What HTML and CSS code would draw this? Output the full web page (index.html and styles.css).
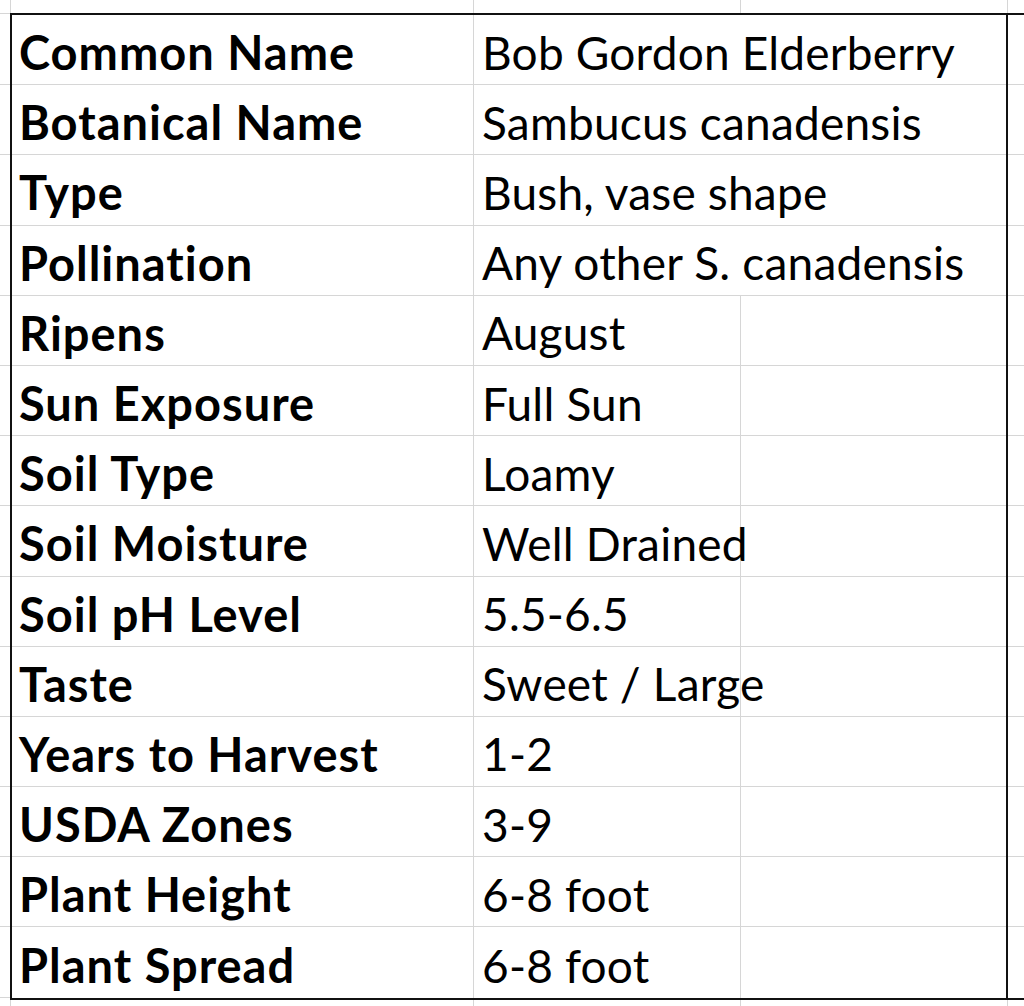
FILE: index.html
```html
<!DOCTYPE html>
<html lang="en">
<head>
<meta charset="utf-8">
<title>Bob Gordon Elderberry</title>
<link rel="stylesheet" href="styles.css">
</head>
<body>
<div class="sheet">
  <div class="strip strip-top">
    <div class="gut"></div>
    <div class="col col-a"></div>
    <div class="col col-b"></div>
    <div class="col col-c"></div>
    <div class="rest"></div>
  </div>
  <div class="middle">
    <div class="gutter gutter-left">
      <div class="g"></div><div class="g"></div><div class="g"></div><div class="g"></div><div class="g"></div><div class="g"></div><div class="g"></div>
      <div class="g"></div><div class="g"></div><div class="g"></div><div class="g"></div><div class="g"></div><div class="g"></div><div class="g"></div>
    </div>
    <div class="table">
      <div class="row"><div class="label">Common Name</div><div class="value">Bob Gordon Elderberry</div><div class="extra"></div></div>
      <div class="row"><div class="label">Botanical Name</div><div class="value">Sambucus canadensis</div><div class="extra"></div></div>
      <div class="row"><div class="label">Type</div><div class="value">Bush, vase shape</div><div class="extra"></div></div>
      <div class="row"><div class="label">Pollination</div><div class="value">Any other S. canadensis</div><div class="extra"></div></div>
      <div class="row"><div class="label">Ripens</div><div class="value">August</div><div class="extra"></div></div>
      <div class="row"><div class="label">Sun Exposure</div><div class="value">Full Sun</div><div class="extra"></div></div>
      <div class="row"><div class="label">Soil Type</div><div class="value">Loamy</div><div class="extra"></div></div>
      <div class="row"><div class="label">Soil Moisture</div><div class="value">Well Drained</div><div class="extra"></div></div>
      <div class="row"><div class="label">Soil pH Level</div><div class="value">5.5-6.5</div><div class="extra"></div></div>
      <div class="row"><div class="label">Taste</div><div class="value">Sweet / Large</div><div class="extra"></div></div>
      <div class="row"><div class="label">Years to Harvest</div><div class="value">1-2</div><div class="extra"></div></div>
      <div class="row"><div class="label">USDA Zones</div><div class="value">3-9</div><div class="extra"></div></div>
      <div class="row"><div class="label">Plant Height</div><div class="value">6-8 foot</div><div class="extra"></div></div>
      <div class="row"><div class="label">Plant Spread</div><div class="value">6-8 foot</div><div class="extra"></div></div>
    </div>
    <div class="gutter gutter-right">
      <div class="g"></div><div class="g"></div><div class="g"></div><div class="g"></div><div class="g"></div><div class="g"></div><div class="g"></div>
      <div class="g"></div><div class="g"></div><div class="g"></div><div class="g"></div><div class="g"></div><div class="g"></div><div class="g"></div>
    </div>
  </div>
  <div class="strip strip-bottom">
    <div class="gut"></div>
    <div class="col col-a"></div>
    <div class="col col-b"></div>
    <div class="col col-c"></div>
    <div class="rest"></div>
  </div>
</div>
</body>
</html>
```

FILE: styles.css
```css
* { box-sizing: border-box; }

html, body {
  margin: 0;
  padding: 0;
  background: #ffffff;
}

body {
  width: 1024px;
  height: 1006px;
  overflow: hidden;
  font-family: Lato, "Liberation Sans", sans-serif;
  color: #000;
}

.sheet {
  display: flex;
  flex-direction: column;
  width: 1024px;
  height: 1006px;
}

.strip {
  display: flex;
  flex: none;
}

.strip-top { height: 13px; }
.strip-bottom { flex: 1; }

.gut { width: 10px; flex: none; }

.col {
  flex: none;
  border-right: 1px solid #d6d6d6;
}

.col-a { width: 464px; border-left: 1px solid #d6d6d6; }
.col-b { width: 267px; }
.col-c { width: 267px; }
.rest { flex: 1; }

.middle {
  display: flex;
  flex: none;
}

.gutter {
  display: flex;
  flex-direction: column;
}

.gutter-left {
  width: 10px;
  flex: none;
  border-top: 1px solid #d6d6d6;
  padding-top: 1px;
}

.gutter-right {
  flex: 1;
  border-top: 2px solid #111;
  border-bottom: 2px solid #111;
}

.g {
  height: 70.2px;
  border-bottom: 1px solid #d6d6d6;
}

.gutter-right .g:last-child { border-bottom: none; }

.table {
  width: 998px;
  flex: none;
  border: 2px solid #111;
  display: flex;
  flex-direction: column;
}

.row {
  display: grid;
  grid-template-columns: 462px 267px 1fr;
  height: 70.2px;
  border-bottom: 1px solid #d6d6d6;
}

.row:last-child { border-bottom: none; }

.label, .value, .extra {
  display: flex;
  align-items: center;
  padding-top: 5px;
  font-size: 46px;
  white-space: nowrap;
  overflow: visible;
}

.label {
  font-weight: 700;
  font-size: 47px;
  letter-spacing: 1px;
  padding-left: 7px;
  border-right: 1px solid #d6d6d6;
}

.value {
  font-weight: 400;
  letter-spacing: 0.2px;
  padding-left: 8px;
  border-right: 1px solid #d6d6d6;
}

.row:first-child .value,
.row:nth-child(2) .value,
.row:nth-child(3) .value,
.row:nth-child(4) .value {
  border-right-color: transparent;
}
```
